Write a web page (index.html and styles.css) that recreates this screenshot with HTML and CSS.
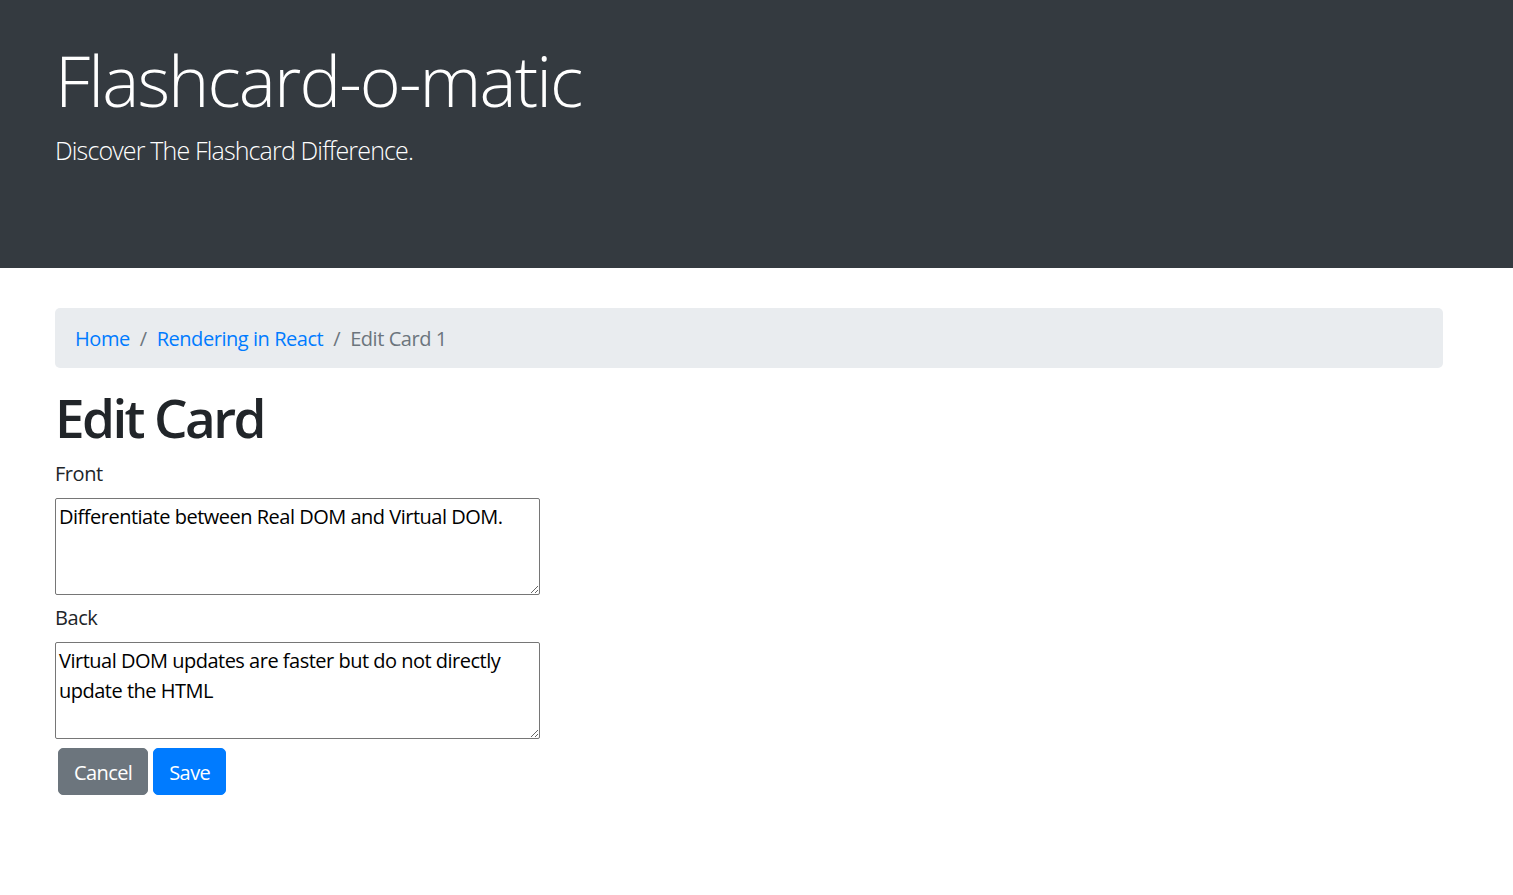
FILE: index.html
```html
<!DOCTYPE html>
<html lang="en">
<head>
<meta charset="utf-8">
<title>Flashcard-o-matic</title>
<link rel="stylesheet" href="styles.css">
</head>
<body>
<header class="jumbotron">
  <div class="container">
    <h1 class="display">Flashcard-o-matic</h1>
    <p class="lead">Discover The Flashcard Difference.</p>
  </div>
</header>
<main class="container">
  <nav class="breadcrumb">
    <a href="#" class="crumb-link">Home</a>
    <span class="sep">/</span>
    <a href="#" class="crumb-link">Rendering in React</a>
    <span class="sep">/</span>
    <span class="crumb-active">Edit Card 1</span>
  </nav>
  <h2 class="page-title">Edit Card</h2>
  <form class="card-form">
    <label class="field-label" for="front">Front</label>
    <textarea id="front" class="field-text" rows="3">Differentiate between Real DOM and Virtual DOM.</textarea>
    <label class="field-label field-label-next" for="back">Back</label>
    <textarea id="back" class="field-text" rows="3">Virtual DOM updates are faster but do not directly update the HTML</textarea>
    <div class="actions">
      <button type="button" class="btn btn-secondary">Cancel</button>
      <button type="submit" class="btn btn-primary">Save</button>
    </div>
  </form>
</main>
</body>
</html>
```

FILE: styles.css
```css
* { box-sizing: border-box; }

html, body {
  margin: 0;
  padding: 0;
  background: #fff;
}

body {
  font-family: "Open Sans", "Noto Sans", "Liberation Sans", sans-serif;
  font-size: 20px;
  line-height: 30px;
  color: #212529;
  letter-spacing: -0.45px;
}

.container {
  padding-left: 55px;
  width: 1443px;
}

.jumbotron {
  background: #343a40;
  color: #fff;
  height: 268px;
  padding-top: 38px;
}

.display {
  margin: 0;
  font-size: 70px;
  line-height: 84px;
  font-weight: 300;
  letter-spacing: -1.9px;
}

.lead {
  margin: 10px 0 0 0;
  font-size: 25px;
  line-height: 37px;
  font-weight: 300;
  letter-spacing: -0.85px;
}

.breadcrumb {
  margin-top: 40px;
  height: 60px;
  background: #e9ecef;
  border-radius: 5px;
  padding: 16px 20px 14px;
  display: flex;
  align-items: center;
}

.crumb-link {
  color: #007bff;
  text-decoration: none;
}

.sep {
  color: #6c757d;
  padding: 0 10px;
}

.crumb-active {
  color: #6c757d;
}

.page-title {
  margin: 18px 0 0 0;
  font-size: 53px;
  line-height: 64px;
  font-weight: 600;
  letter-spacing: -2.6px;
}

.card-form {
  display: flex;
  flex-direction: column;
  align-items: flex-start;
}

.field-label {
  display: block;
  margin-top: 9px;
}

.field-label-next {
  margin-top: 8px;
}

.field-text {
  display: block;
  margin-top: 9px;
  width: 485px;
  height: 97px;
  padding: 3px 3px 1px;
  border: 1px solid #767676;
  border-radius: 2px;
  font-family: inherit;
  font-size: 20px;
  line-height: 30px;
  letter-spacing: -0.5px;
  color: #000;
  resize: vertical;
  overflow: hidden;
}

.actions {
  margin-top: 9px;
  margin-left: 3px;
  display: flex;
  gap: 5px;
}

.btn {
  font-family: inherit;
  font-size: 20px;
  line-height: 30px;
  letter-spacing: -0.6px;
  padding: 8.5px 15px 6.5px;
  border: 1px solid transparent;
  border-radius: 5px;
  color: #fff;
  cursor: pointer;
}

.btn-secondary {
  background: #6c757d;
  border-color: #6c757d;
}

.btn-primary {
  background: #007bff;
  border-color: #007bff;
}
```
